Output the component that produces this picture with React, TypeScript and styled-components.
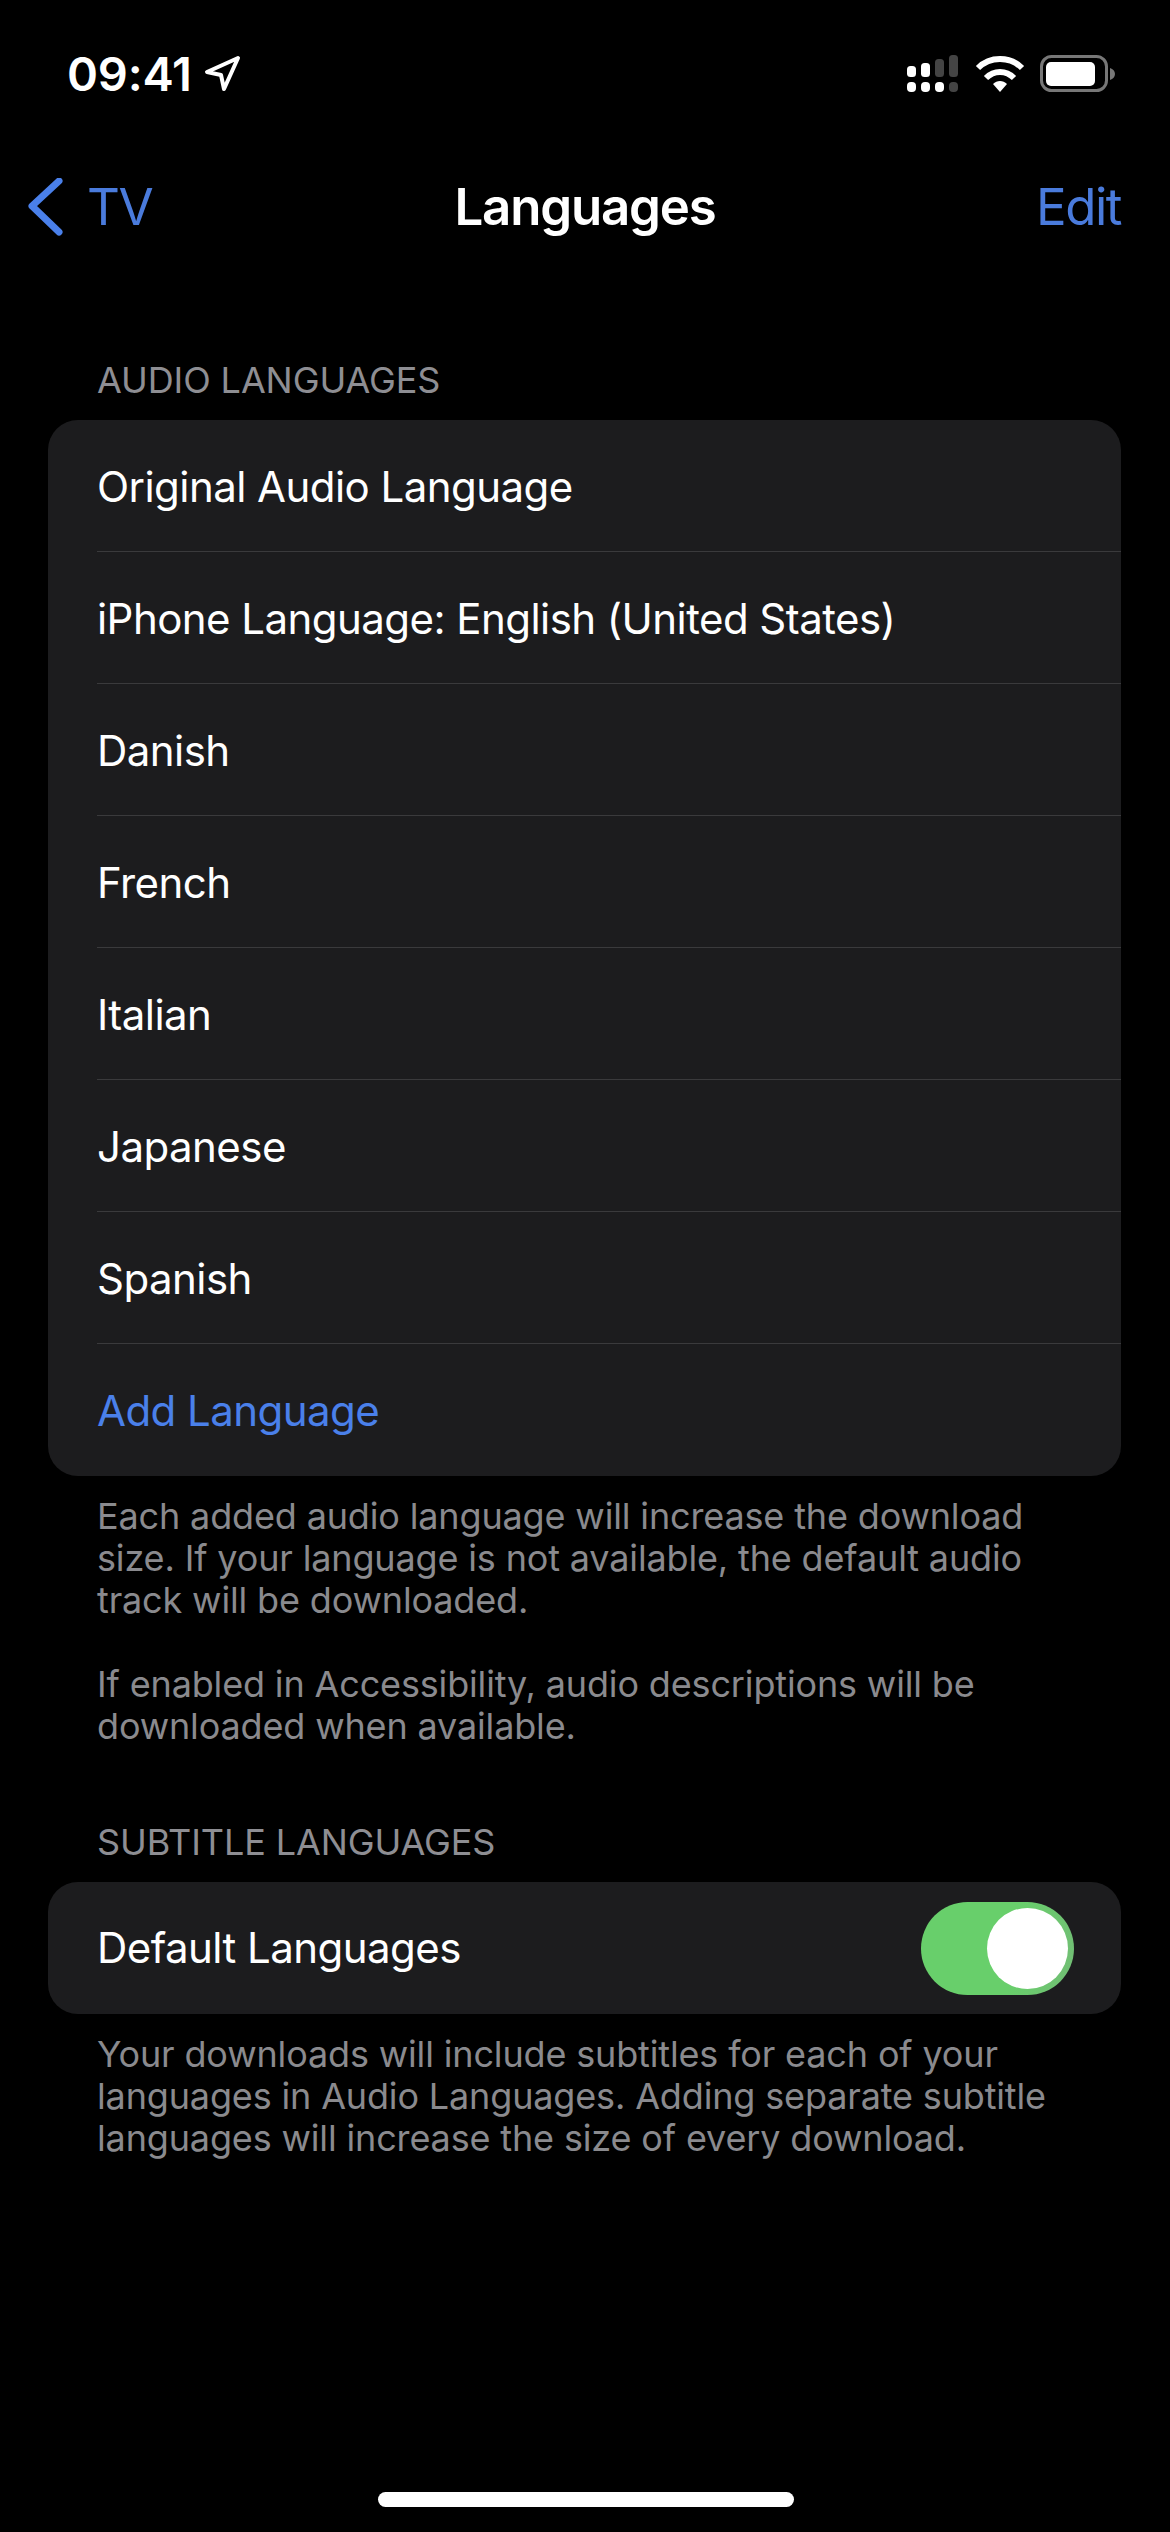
import styled, { createGlobalStyle } from "styled-components";

const GlobalStyle = createGlobalStyle`
  html, body {
    margin: 0;
    padding: 0;
    background: #000;
  }
  body {
    font-family: Inter, "Liberation Sans", sans-serif;
    -webkit-font-smoothing: antialiased;
  }
`;

const audioRows = [
  "Original Audio Language",
  "iPhone Language: English (United States)",
  "Danish",
  "French",
  "Italian",
  "Japanese",
  "Spanish",
];

export default function App() {
  return (
    <Screen>
      <GlobalStyle />
      <StatusBar>
        <Clock>
          <ClockText>09:41</ClockText>
          <svg width="38" height="38" viewBox="0 0 38 38" fill="none">
            <path
              d="M34 3 L3 17 L17 20 L20 34 Z"
              stroke="#fff"
              strokeWidth="4"
              strokeLinejoin="round"
            />
          </svg>
        </Clock>
        <StatusIcons>
          <svg width="52" height="38" viewBox="0 0 52 38">
            <rect x="0" y="11" width="9" height="11" rx="3.5" fill="#fff" />
            <rect x="14" y="8" width="9" height="14" rx="3.5" fill="#fff" />
            <rect x="28" y="4" width="9" height="18" rx="3.5" fill="#444" />
            <rect x="42" y="0" width="9" height="22" rx="3.5" fill="#444" />
            <rect x="0" y="27" width="9" height="10" rx="4" fill="#fff" />
            <rect x="14" y="27" width="9" height="10" rx="4" fill="#fff" />
            <rect x="28" y="27" width="9" height="10" rx="4" fill="#fff" />
            <rect x="42" y="27" width="9" height="10" rx="4" fill="#444" />
          </svg>
          <WifiIcon width="50" height="38" viewBox="0 0 50 38" fill="none">
            <path d="M3 13 C15 1 35 1 47 13" stroke="#fff" strokeWidth="6" />
            <path d="M11 23 C19 15 31 15 39 23" stroke="#fff" strokeWidth="6" />
            <path d="M18 29 C22 25 28 25 32 29 L25 37 Z" fill="#fff" />
          </WifiIcon>
          <svg width="76" height="38" viewBox="0 0 76 38" fill="none">
            <rect x="1.5" y="1.5" width="65" height="34" rx="10" stroke="#777" strokeWidth="3" />
            <rect x="6" y="7" width="49" height="24" rx="5" fill="#fff" />
            <path d="M70 13 C73 14 75 16 75 19 C75 22 73 24 70 25 Z" fill="#777" />
          </svg>
        </StatusIcons>
      </StatusBar>
      <NavBar>
        <BackLink>
          <svg width="36" height="58" viewBox="0 0 36 58" fill="none">
            <path
              d="M31 3 L4 28 L31 54"
              stroke="#4a80ea"
              strokeWidth="7"
              strokeLinecap="round"
              strokeLinejoin="round"
            />
          </svg>
          <NavLabel>TV</NavLabel>
        </BackLink>
        <NavTitle>Languages</NavTitle>
        <NavLabel>Edit</NavLabel>
      </NavBar>

      <SectionHeader>AUDIO LANGUAGES</SectionHeader>
      <Panel>
        {audioRows.map((label) => (
          <Row key={label}>
            <RowLabel>{label}</RowLabel>
          </Row>
        ))}
        <Row>
          <RowLabel $accent>Add Language</RowLabel>
        </Row>
      </Panel>
      <Footnote>
        Each added audio language will increase the download size. If your
        language is not available, the default audio track will be downloaded.
      </Footnote>
      <FootnoteNext>
        If enabled in Accessibility, audio descriptions will be downloaded when
        available.
      </FootnoteNext>

      <SubtitleHeader>SUBTITLE LANGUAGES</SubtitleHeader>
      <Panel>
        <ToggleRow>
          <RowLabel>Default Languages</RowLabel>
          <Toggle>
            <Knob />
          </Toggle>
        </ToggleRow>
      </Panel>
      <Footnote>
        Your downloads will include subtitles for each of your languages in
        Audio Languages. Adding separate subtitle languages will increase the
        size of every download.
      </Footnote>
      <HomeIndicator />
    </Screen>
  );
}

const Screen = styled.div`
  position: relative;
  width: 1170px;
  height: 2532px;
  overflow: hidden;
  background: #000;
  color: #fff;
`;

const StatusBar = styled.div`
  display: flex;
  justify-content: space-between;
  align-items: flex-start;
  height: 138px;
  padding: 55px 54px 0 67px;
  box-sizing: border-box;
`;

const Clock = styled.div`
  display: flex;
  align-items: center;
  gap: 12px;
`;

const ClockText = styled.span`
  font-size: 47px;
  line-height: 38px;
  font-weight: 600;
  letter-spacing: -0.2px;
`;

const StatusIcons = styled.div`
  display: flex;
  align-items: flex-start;
  gap: 15px;
`;

const WifiIcon = styled.svg`
  margin-left: 1px;
`;

const NavBar = styled.div`
  position: relative;
  display: flex;
  justify-content: space-between;
  align-items: center;
  height: 138px;
  padding: 0 49px 0 28px;
`;

const BackLink = styled.div`
  display: flex;
  align-items: center;
  gap: 23px;
`;

const NavLabel = styled.span`
  font-size: 51px;
  line-height: 60px;
  color: #4a7bdc;
  letter-spacing: -1.5px;
`;

const NavTitle = styled.span`
  position: absolute;
  left: 0;
  right: 0;
  text-align: center;
  font-size: 51px;
  line-height: 60px;
  font-weight: 600;
  letter-spacing: -1.2px;
`;

const SectionHeader = styled.div`
  margin: 82px 0 0 97px;
  height: 62px;
  font-size: 36px;
  line-height: 44px;
  letter-spacing: -0.1px;
  color: #8e8e93;
`;

const SubtitleHeader = styled(SectionHeader)`
  margin-top: 73px;
`;

const Panel = styled.div`
  margin: 0 49px 0 48px;
  border-radius: 30px;
  background: #1c1c1e;
  overflow: hidden;
`;

const Row = styled.div`
  display: flex;
  justify-content: space-between;
  align-items: center;
  height: 132px;
  margin-left: 49px;
  padding: 2px 47px 0 0;
  box-sizing: border-box;
  border-bottom: 1.5px solid #3a3a3c;

  &:last-child {
    border-bottom: none;
  }
`;

const ToggleRow = styled(Row)`
  padding-top: 0;
`;

const RowLabel = styled.span<{ $accent?: boolean }>`
  font-size: 42px;
  line-height: 52px;
  letter-spacing: -0.55px;
  color: ${(p) => (p.$accent ? "#4a80ea" : "#fff")};
`;

const Toggle = styled.div`
  display: flex;
  justify-content: flex-end;
  align-items: center;
  width: 153px;
  height: 93px;
  padding-right: 6px;
  box-sizing: border-box;
  border-radius: 47px;
  background: linear-gradient(100deg, #68cf6b 60%, #72bd75);
`;

const Knob = styled.div`
  width: 81px;
  height: 81px;
  border-radius: 50%;
  background: #fff;
`;

const Footnote = styled.p`
  margin: 19px 60px 0 97px;
  font-size: 36px;
  line-height: 42px;
  letter-spacing: -0.15px;
  color: #8a8a8e;
`;

const FootnoteNext = styled(Footnote)`
  margin-top: 42px;
`;

const HomeIndicator = styled.div`
  position: absolute;
  left: 378px;
  bottom: 25px;
  width: 416px;
  height: 15px;
  border-radius: 8px;
  background: #fff;
`;
